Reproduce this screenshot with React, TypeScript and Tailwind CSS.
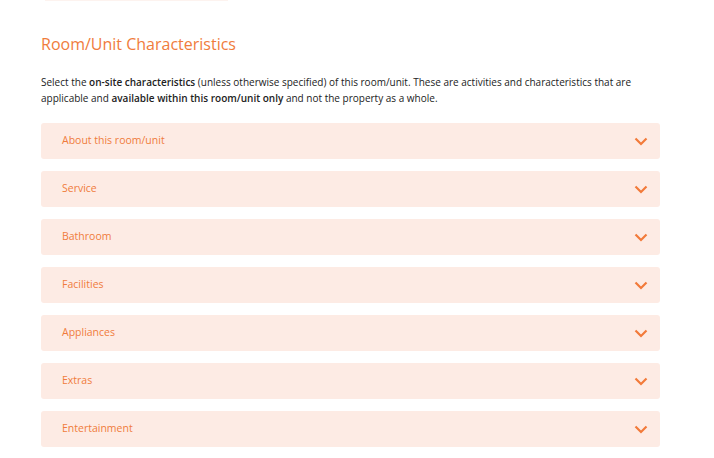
const sections = [
  "About this room/unit",
  "Service",
  "Bathroom",
  "Facilities",
  "Appliances",
  "Extras",
  "Entertainment",
];

function Chevron() {
  return (
    <svg width="14" height="9" viewBox="0 0 14 9" fill="none">
      <path d="M1.5 1.5L7 7L12.5 1.5" stroke="#f27a3a" strokeWidth="2.2" />
    </svg>
  );
}

export default function App() {
  return (
    <div className="min-h-[458px] w-[714px] bg-white font-['Open_Sans',sans-serif]">
      <div className="ml-[45px] h-px w-[183px] bg-[#fdf3ef]" />
      <div className="ml-[41px] w-[619px] pt-[30px]">
        <h2 className="text-[16px] leading-[26px] text-[#f07c3c]">Room/Unit Characteristics</h2>
        <p className="mt-[17px] text-[10px] leading-[16px] text-[#222]">
          Select the <b className="font-semibold">on-site characteristics</b> (unless otherwise specified) of this room/unit. These are
          activities and characteristics that are applicable and{" "}
          <b className="font-semibold">available within this room/unit only</b> and not the property as a whole.
        </p>
        <div className="mt-[17px] flex flex-col gap-3">
          {sections.map((s) => (
            <div
              key={s}
              className="flex h-9 items-center justify-between rounded-[3px] bg-[#fdebe4] pl-[21px] pr-[12px]"
            >
              <span className="text-[10.5px] text-[#f07c3c]">{s}</span>
              <Chevron />
            </div>
          ))}
        </div>
      </div>
    </div>
  );
}
